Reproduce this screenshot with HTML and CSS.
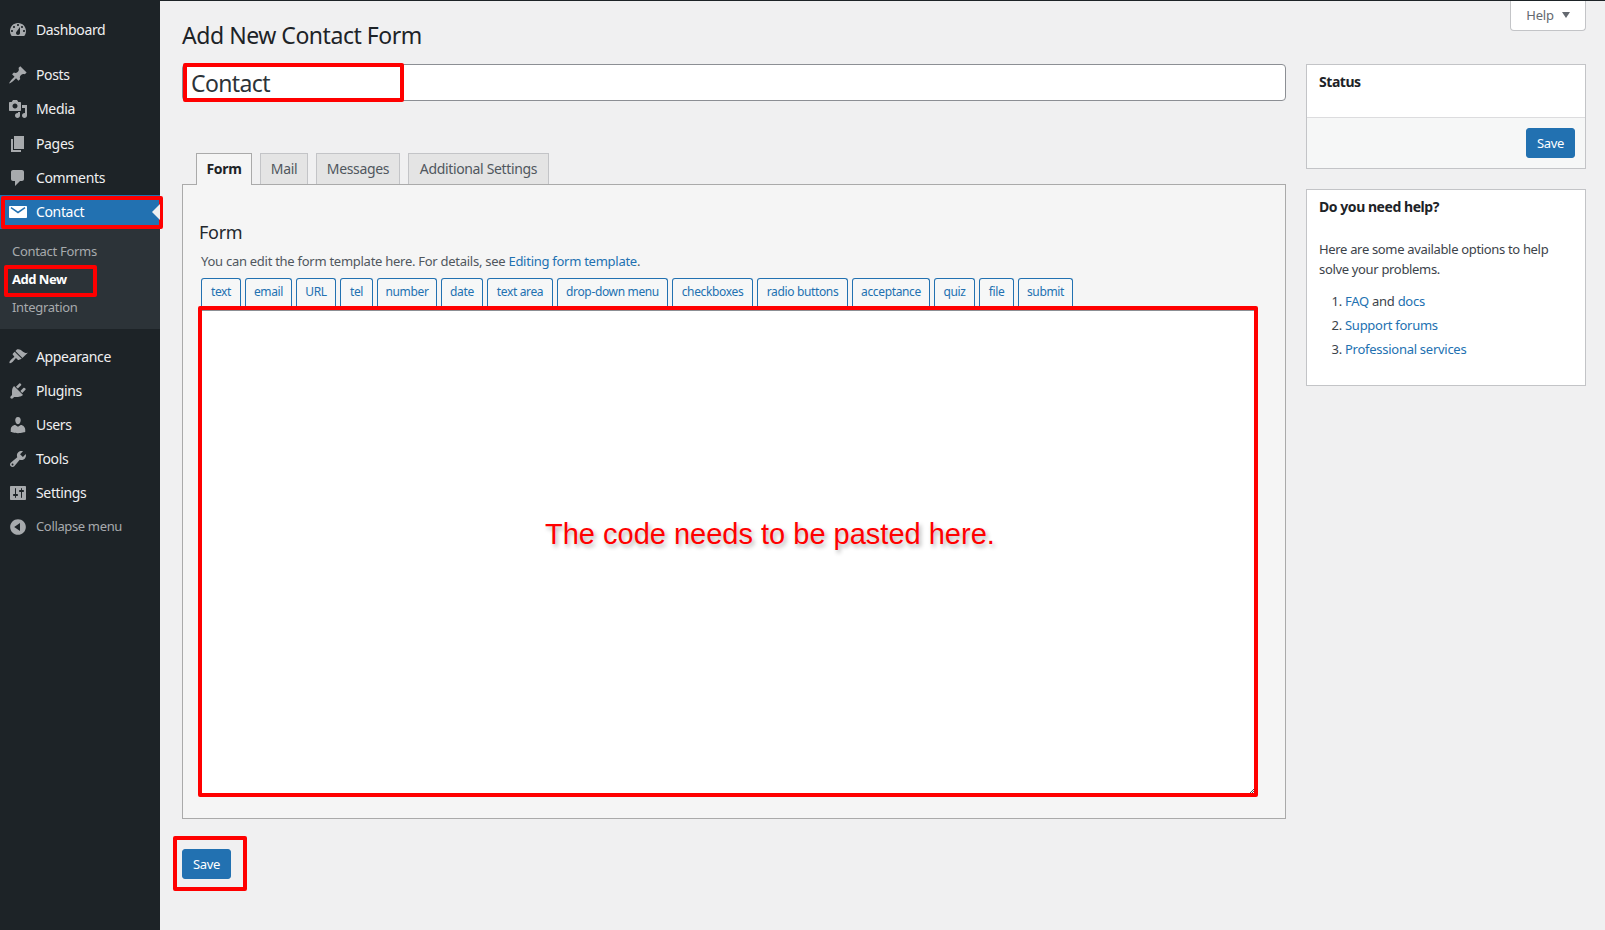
FILE: index.html
```html
<!DOCTYPE html>
<html lang="en">
<head>
<meta charset="utf-8">
<title>Add New Contact Form</title>
<link rel="stylesheet" href="styles.css">
</head>
<body>
<div class="shell">
  <nav class="menu">
    <a class="item gap-after"><svg class="ico" viewBox="0 0 20 20"><path fill-rule="evenodd" d="M3.76 16h12.48c1.1-1.37 1.76-3.11 1.76-5 0-4.42-3.58-8-8-8s-8 3.58-8 8c0 1.89.66 3.63 1.76 5zM10 4c.55 0 1 .45 1 1s-.45 1-1 1-1-.45-1-1 .45-1 1-1zM6 6c.55 0 1 .45 1 1s-.45 1-1 1-1-.45-1-1 .45-1 1-1zm8 0c.55 0 1 .45 1 1s-.45 1-1 1-1-.45-1-1 .45-1 1-1zm-5.37 5.55L12 7v6c0 1.1-.9 2-2 2s-2-.9-2-2c0-.57.24-1.08.63-1.45zM4 10c.55 0 1 .45 1 1s-.45 1-1 1-1-.45-1-1 .45-1 1-1zm12 0c.55 0 1 .45 1 1s-.45 1-1 1-1-.45-1-1 .45-1 1-1z"/></svg>Dashboard</a>
    <a class="item"><svg class="ico" viewBox="0 0 20 20"><path d="M10.44 3.02l1.82-1.82 6.36 6.35-1.83 1.82c-1.05-.68-2.48-.57-3.41.36l-.75.75c-.92.93-1.04 2.35-.35 3.41l-1.83 1.82-2.41-2.41-2.8 2.79c-.42.42-3.38 2.71-3.8 2.29s1.86-3.39 2.28-3.81l2.79-2.79L4.1 9.36l1.83-1.82c1.05.69 2.48.57 3.41-.36l.75-.75c.93-.92 1.05-2.35.35-3.41z"/></svg>Posts</a>
    <a class="item item-media"><svg class="ico" viewBox="0 0 20 20"><path fill-rule="evenodd" d="M13 11V4c0-.55-.45-1-1-1h-1.67L9 1H5L3.67 3H2c-.55 0-1 .45-1 1v7c0 .55.45 1 1 1h10c.55 0 1-.45 1-1zM7 4.5c1.38 0 2.5 1.12 2.5 2.5S8.38 9.5 7 9.5 4.5 8.38 4.5 7 5.62 4.5 7 4.5zM14 6h5v10.5c0 1.38-1.12 2.5-2.5 2.5S14 17.88 14 16.5s1.12-2.5 2.5-2.5c.17 0 .34.02.5.05V9h-3V6zm-4 8.05V13h2v3.5c0 1.38-1.12 2.5-2.5 2.5S7 17.88 7 16.5 8.12 14 9.5 14c.17 0 .34.02.5.05z"/></svg>Media</a>
    <a class="item"><svg class="ico" viewBox="0 0 20 20"><path d="M6 15V2h10v13H6zm-1 1h8v2H3V5h2v11z"/></svg>Pages</a>
    <a class="item item-comments"><svg class="ico" viewBox="0 0 20 20"><path d="M5 2h9c1.1 0 2 .9 2 2v7c0 1.1-.9 2-2 2h-2l-5 5v-5H5c-1.1 0-2-.9-2-2V4c0-1.1.9-2 2-2z"/></svg>Comments</a>
    <a class="item current"><svg class="ico ico-mail" viewBox="0 0 20 20"><path d="M2 4h16c.55 0 1 .45 1 1v10c0 .55-.45 1-1 1H2c-.55 0-1-.45-1-1V5c0-.55.45-1 1-1zm.6 2.2L10 11.6l7.4-5.4-.8-1.2L10 9.6 3.4 5z"/></svg>Contact<span class="mark mark-contact"></span></a>
    <div class="submenu">
      <a class="sub">Contact Forms</a>
      <a class="sub sub-on">Add New<span class="mark mark-addnew"></span></a>
      <a class="sub">Integration</a>
    </div>
    <a class="item"><svg class="ico" viewBox="0 0 20 20"><path d="M14.48 11.06L7.41 3.99l1.5-1.5c.5-.56 2.3-.47 3.51.32 1.21.8 1.43 1.28 2.91 2.1 1.18.64 2.45 1.26 4.45.85zm-.71.71L6.7 4.7 4.93 6.47c-.39.39-.39 1.02 0 1.41l1.06 1.06c.39.39.39 1.03 0 1.42-.6.6-1.43 1.11-2.21 1.69-.35.26-.7.53-1.01.84-1.21 1.21-1.69 2.63-1.17 3.15.52.52 1.94.04 3.15-1.17.31-.31.58-.66.84-1.01.58-.78 1.09-1.61 1.69-2.21.39-.39 1.03-.39 1.42 0l1.06 1.06c.39.39 1.02.39 1.41 0z"/></svg>Appearance</a>
    <a class="item"><svg class="ico" viewBox="0 0 20 20"><path d="M13.11 4.36L9.87 7.6 8 5.73l3.24-3.24c.35-.34 1.05-.2 1.56.32.52.51.66 1.21.31 1.55zm-8 1.77l.91-1.12 9.01 9.01-1.19.84c-.71.71-2.63 1.16-3.82 1.16H6.14L4.9 17.26c-.59.59-1.54.59-2.12 0-.59-.58-.59-1.53 0-2.12l1.24-1.24v-3.88c0-1.13.4-3.19 1.09-3.89zm7.26 3.97l3.24-3.24c.34-.35 1.04-.21 1.55.31.52.51.66 1.21.31 1.55l-3.24 3.25z"/></svg>Plugins</a>
    <a class="item"><svg class="ico" viewBox="0 0 20 20"><path d="M10 9.25c-2.27 0-2.73-3.44-2.73-3.44C7 4.02 7.82 2 9.97 2c2.16 0 2.98 2.02 2.71 3.81 0 0-.41 3.44-2.68 3.44zm0 2.57L12.72 10c2.39 0 4.52 2.33 4.52 4.53v2.49s-3.65 1.13-7.24 1.13c-3.65 0-7.24-1.13-7.24-1.13v-2.49c0-2.25 1.94-4.48 4.47-4.48z"/></svg>Users</a>
    <a class="item"><svg class="ico" viewBox="0 0 20 20"><path fill-rule="evenodd" d="M16.68 9.77c-1.34 1.34-3.3 1.67-4.95.99l-5.41 6.52c-.99.99-2.59.99-3.58 0s-.99-2.59 0-3.57l6.52-5.42c-.68-1.65-.35-3.61.99-4.95 1.28-1.28 3.12-1.62 4.72-1.06l-2.89 2.89 2.82 2.82 2.86-2.87c.53 1.58.18 3.39-1.08 4.65zM3.81 16.21c.4.39 1.04.39 1.43 0 .4-.4.4-1.04 0-1.43-.39-.4-1.03-.4-1.43 0-.39.39-.39 1.03 0 1.43z"/></svg>Tools</a>
    <a class="item"><svg class="ico" viewBox="0 0 20 20"><path fill-rule="evenodd" d="M18 16V4c0-.55-.45-1-1-1H3c-.55 0-1 .45-1 1v12c0 .55.45 1 1 1h14c.55 0 1-.45 1-1zM8 11h1c.55 0 1 .45 1 1s-.45 1-1 1H8v1.5c0 .28-.22.5-.5.5s-.5-.22-.5-.5V13H6c-.55 0-1-.45-1-1s.45-1 1-1h1V5.5c0-.28.22-.5.5-.5s.5.22.5.5V11zm5-2h-1c-.55 0-1-.45-1-1s.45-1 1-1h1V5.5c0-.28.22-.5.5-.5s.5.22.5.5V7h1c.55 0 1 .45 1 1s-.45 1-1 1h-1v5.5c0 .28-.22.5-.5.5s-.5-.22-.5-.5V9z"/></svg>Settings</a>
    <a class="item collapse"><svg class="ico" viewBox="0 0 20 20"><path fill-rule="evenodd" d="M10 2.16c4.33 0 7.84 3.51 7.84 7.84s-3.51 7.84-7.84 7.84S2.16 14.33 2.16 10 5.71 2.16 10 2.16zm2 11.72V6.12L6.18 9.97z"/></svg>Collapse menu</a>
  </nav>

  <main class="content">
    <header class="head">
      <h1 class="title">Add New Contact Form</h1>
      <button class="help-tab">Help<span class="caret"></span></button>
    </header>
    <div class="columns">
      <section class="primary">
        <div class="title-field">
          <input class="title-input" type="text" value="Contact">
          <span class="mark mark-title"></span>
        </div>
        <div class="tabs">
          <a class="tab tab-on">Form</a>
          <a class="tab">Mail</a>
          <a class="tab">Messages</a>
          <a class="tab">Additional Settings</a>
        </div>
        <div class="panel">
          <h2 class="panel-title">Form</h2>
          <p class="panel-desc">You can edit the form template here. For details, see <a class="link">Editing form template</a>.</p>
          <div class="tags">
            <span class="tag">text</span>
            <span class="tag">email</span>
            <span class="tag">URL</span>
            <span class="tag">tel</span>
            <span class="tag">number</span>
            <span class="tag">date</span>
            <span class="tag">text area</span>
            <span class="tag">drop-down menu</span>
            <span class="tag">checkboxes</span>
            <span class="tag">radio buttons</span>
            <span class="tag">acceptance</span>
            <span class="tag">quiz</span>
            <span class="tag">file</span>
            <span class="tag">submit</span>
          </div>
          <div class="code-box">
            <span class="code-note">The code needs to be pasted here.</span>
            <svg class="grip" viewBox="0 0 4 4"><path d="M0 4L4 0M2 4L4 2" stroke="#555" stroke-width="1" fill="none"/></svg>
          </div>
        </div>
        <div class="save-row">
          <button class="btn">Save</button>
          <span class="mark mark-save"></span>
        </div>
      </section>
      <aside class="side">
        <div class="box">
          <h3 class="box-title">Status</h3>
          <div class="box-spacer"></div>
          <div class="box-foot"><button class="btn">Save</button></div>
        </div>
        <div class="box box-help">
          <h3 class="box-title">Do you need help?</h3>
          <p class="help-text">Here are some available options to help solve your problems.</p>
          <ol class="help-list">
            <li><a class="link">FAQ</a> and <a class="link">docs</a></li>
            <li><a class="link">Support forums</a></li>
            <li><a class="link">Professional services</a></li>
          </ol>
        </div>
      </aside>
    </div>
  </main>
</div>
</body>
</html>
```

FILE: styles.css
```css
* { box-sizing: border-box; }
html, body { margin: 0; padding: 0; }
body {
  background: #f0f0f1;
  color: #3c434a;
  font-family: "Noto Sans", "Open Sans", sans-serif;
  font-size: 13px;
  width: 1605px;
  height: 930px;
  overflow: hidden;
}
.shell { display: flex; height: 930px; }

.menu {
  position: relative;
  z-index: 2;
  flex: 0 0 160px;
  background: #1d2327;
  padding-top: 12px;
}
.item {
  position: relative;
  display: flex;
  align-items: center;
  height: 34px;
  color: #f0f0f1;
  font-size: 14px;
  letter-spacing: -0.35px;
}
.gap-after { margin-bottom: 11px; }
.item-media { margin-bottom: 1px; }
.item-comments { margin-bottom: 1px; }
.ico {
  flex: none;
  width: 20px;
  height: 20px;
  margin: 2px 8px 0;
  fill: #a7aaad;
}
.current { background: #2271b1; color: #fff; padding-bottom: 2px; }
.current::after {
  content: "";
  position: absolute;
  right: 0;
  top: 50%;
  margin-top: -8px;
  border: 8px solid transparent;
  border-left-width: 0;
  border-right-color: #f0f0f1;
}
.ico-mail { fill: #fff; }
.submenu {
  background: #2c3338;
  padding: 8px 0;
  margin-bottom: 10px;
}
.sub {
  position: relative;
  display: flex;
  align-items: center;
  height: 28px;
  padding-left: 12px;
  font-size: 13px;
  color: #a7aaad;
  letter-spacing: -0.3px;
}
.sub-on { color: #fff; font-weight: 700; letter-spacing: -0.5px; }
.collapse { color: #a7aaad; font-size: 13px; }

.mark { position: absolute; border: 4px solid #f00; border-radius: 2px; pointer-events: none; }
.mark-contact { left: 1px; top: 1px; width: 162px; height: 33px; }
.mark-addnew { left: 4px; top: 0; width: 93px; height: 32px; }
.mark-title { left: 1px; top: -1px; width: 221px; height: 39px; }
.mark-save { left: -9px; top: -13px; width: 74px; height: 55px; }

.content { flex: 1; min-width: 0; padding: 1px 19px 0 22px; border-top: 1px solid #1d2327; }
.head { display: flex; justify-content: space-between; align-items: flex-start; height: 62px; }
.title {
  margin: 20px 0 0;
  font-size: 23px;
  line-height: 26px;
  font-weight: 400;
  color: #1d2327;
  letter-spacing: -0.46px;
}
.help-tab {
  display: flex;
  align-items: center;
  justify-content: center;
  gap: 8px;
  width: 76px;
  height: 30px;
  margin-top: -1px;
  padding: 0 0 2px;
  background: #fff;
  border: 1px solid #c3c4c7;
  border-top: 0;
  border-radius: 0 0 4px 4px;
  color: #646970;
  font: 13px "Noto Sans", sans-serif;
  letter-spacing: -0.2px;
}
.caret { border: 4px solid transparent; border-top: 6px solid #646970; border-bottom: 0; }

.columns { display: flex; gap: 20px; align-items: flex-start; }
.primary { flex: 0 0 1104px; }
.side { flex: 0 0 280px; display: flex; flex-direction: column; gap: 20px; }

.title-field { position: relative; height: 37px; }
.title-input {
  display: block;
  width: 100%;
  height: 37px;
  padding: 0 8px;
  background: #fff;
  border: 1px solid #8c8f94;
  border-radius: 4px;
  color: #2c3338;
  font: 23px "Noto Sans", sans-serif;
  letter-spacing: -0.6px;
  outline: 0;
}

.tabs { display: flex; gap: 8px; padding-left: 14px; margin-top: 52px; height: 31px; }
.tab {
  display: flex;
  align-items: center;
  justify-content: center;
  height: 31px;
  padding-bottom: 2px;
  background: #e4e4e4;
  border: 1px solid #c3c4c7;
  border-bottom: 0;
  color: #50575e;
  font-size: 14px;
  letter-spacing: -0.35px;
}
.tab:nth-child(1) { width: 56px; }
.tab:nth-child(2) { width: 48px; }
.tab:nth-child(3) { width: 84px; }
.tab:nth-child(4) { width: 141px; }
.tab-on {
  position: relative;
  z-index: 1;
  height: 32px;
  padding-bottom: 3px;
  background: #f5f5f5;
  border-color: #aaa;
  color: #1d2327;
  font-weight: 700;
}

.panel {
  height: 635px;
  background: #f5f5f5;
  border: 1px solid #aaa;
  padding: 0 27px 0 15px;
}
.panel-title {
  margin: 35px 0 0 1px;
  font-size: 18px;
  line-height: 24px;
  font-weight: 400;
  color: #23282d;
  letter-spacing: -0.3px;
}
.panel-desc {
  margin: 7px 0 0 3px;
  font-size: 13px;
  line-height: 20px;
  color: #50575e;
  letter-spacing: -0.27px;
}
.link { color: #2271b1; }
.tags {
  display: grid;
  grid-template-columns: 40px 47px 40px 33px 60px 42px 66px 111px 81px 91px 78px 41px 35px 55px;
  column-gap: 4px;
  margin: 7px 0 0 3px;
  width: max-content;
}
.tag {
  display: flex;
  align-items: center;
  justify-content: center;
  height: 30px;
  padding-bottom: 4px;
  background: #f6f7f7;
  border: 1px solid #2271b1;
  border-bottom: 0;
  border-radius: 3px 3px 0 0;
  color: #2271b1;
  font-size: 12px;
  letter-spacing: -0.35px;
  white-space: nowrap;
}
.code-box {
  position: relative;
  width: 1060px;
  height: 491px;
  margin-top: -2px;
  background: #fff;
  border: 4px solid #f00;
  border-radius: 2px;
  box-shadow: inset 0 1px 0 #8c8f94;
}
.code-note {
  position: absolute;
  left: 343px;
  top: 206px;
  color: #f00;
  font-family: "Liberation Sans", Arial, sans-serif;
  font-size: 29px;
  line-height: 36px;
  white-space: nowrap;
  text-shadow: 2px 3px 4px rgba(0, 0, 0, .3);
}
.grip { position: absolute; right: 0; bottom: 0; width: 4px; height: 4px; display: block; }

.save-row { position: relative; margin-top: 30px; }

.btn {
  display: block;
  width: 49px;
  height: 30px;
  padding: 0;
  background: #2271b1;
  border: 1px solid #2271b1;
  border-radius: 3px;
  color: #fff;
  font: 13px "Noto Sans", sans-serif;
  letter-spacing: -0.3px;
}

.box { background: #fff; border: 1px solid #c3c4c7; }
.box-title {
  margin: 0;
  padding: 7px 12px 0;
  font-size: 14px;
  line-height: 19px;
  font-weight: 700;
  color: #1d2327;
  letter-spacing: -0.45px;
}
.box-spacer { height: 26px; }
.box-foot {
  display: flex;
  justify-content: flex-end;
  padding: 10px 10px 10px;
  height: 51px;
  background: #f6f7f7;
  border-top: 1px solid #dcdcde;
}
.box-help { height: 197px; }
.help-text {
  margin: 23px 12px 0;
  font-size: 13px;
  line-height: 20px;
  color: #3c434a;
  letter-spacing: -0.33px;
}
.help-list {
  margin: 12px 12px 0;
  padding-left: 26px;
  font-size: 13px;
  line-height: 20px;
  letter-spacing: -0.27px;
}
.help-list li { margin-bottom: 4px; }
```
